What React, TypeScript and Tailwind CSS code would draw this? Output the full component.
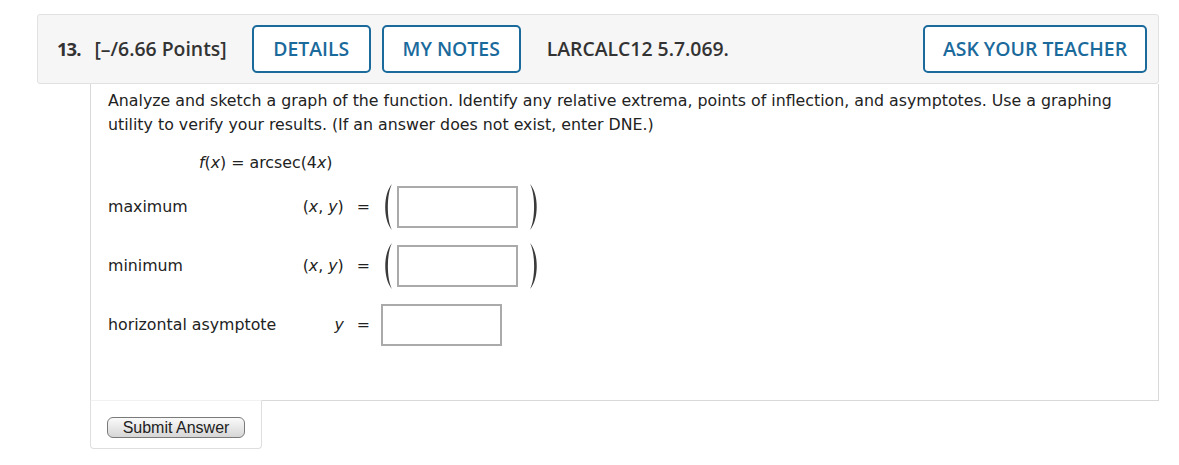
import React from 'react';

const HEAD_FONT = 'font-["Open_Sans",sans-serif]';
const BODY_FONT = 'font-["DejaVu_Sans",Verdana,sans-serif]';

const BLUE_BTN =
  'flex h-[48px] items-center justify-center rounded-[5px] border-2 border-[#1b6a9c] bg-white text-[19.4px] font-semibold text-[#1b6a9c]';

function Paren({ side }: { side: 'left' | 'right' }) {
  const d =
    side === 'left'
      ? 'M11 0 C2 10 2 36 11 46 C5.5 36 5.5 10 11 0 Z'
      : 'M1 0 C10 10 10 36 1 46 C6.5 36 6.5 10 1 0 Z';
  return (
    <svg width="12" height="46" viewBox="0 0 12 46" className="shrink-0" aria-hidden>
      <path d={d} fill="#3a3a3a" />
    </svg>
  );
}

function AnswerBox() {
  return <div className="h-[42px] w-[121px] shrink-0 border-2 border-[#aaaaaa] bg-white" />;
}

function Row({
  label,
  math,
  point,
}: {
  label: string;
  math: React.ReactNode;
  point?: boolean;
}) {
  return (
    <div className="flex h-[42px] items-center">
      <div className="w-[180px] whitespace-nowrap">{label}</div>
      <div className="flex w-[82px] justify-end whitespace-nowrap">
        {math}
        <span className="ml-[13px]">=</span>
      </div>
      <div className="ml-[11px] flex items-center">
        {point ? (
          <>
            <Paren side="left" />
            <div className="ml-[4px]">
              <AnswerBox />
            </div>
            <div className="ml-[11px]">
              <Paren side="right" />
            </div>
          </>
        ) : (
          <AnswerBox />
        )}
      </div>
    </div>
  );
}

export default function App() {
  const xy = (
    <span>
      (<i>x</i>, <i>y</i>)
    </span>
  );

  return (
    <div className="min-h-[465px] bg-white pl-[37px] pr-[20px] pt-[14px]">
      {/* question header */}
      <div
        className={`flex h-[70px] items-center rounded-[3px] border border-[#e1e1e1] bg-[#f6f6f6] pl-[19px] pr-[11px] text-[#333] ${HEAD_FONT}`}
      >
        <span className="text-[18.5px] font-bold tracking-[-1px]">13.</span>
        <span className="ml-[14px] text-[19.4px] font-semibold">[–/6.66 Points]</span>
        <button type="button" className={`ml-[25px] w-[119px] ${BLUE_BTN}`}>
          DETAILS
        </button>
        <button type="button" className={`ml-[11px] w-[139px] ${BLUE_BTN}`}>
          MY NOTES
        </button>
        <span className="ml-[26px] text-[19.4px] font-semibold">LARCALC12 5.7.069.</span>
        <button type="button" className={`ml-auto w-[224px] ${BLUE_BTN}`}>
          ASK YOUR TEACHER
        </button>
      </div>

      {/* question body */}
      <div
        className={`ml-[53px] border-x border-b border-[#d9d9d9] pb-[54px] pl-[17px] pt-[5px] text-[15.8px] leading-[24px] text-[#222] ${BODY_FONT}`}
      >
        <p className="pr-[40px]">
          Analyze and sketch a graph of the function. Identify any relative extrema, points of inflection, and
          asymptotes. Use a graphing utility to verify your results. (If an answer does not exist, enter DNE.)
        </p>
        <p className="mt-[14px] pl-[91px]">
          <i>f</i>(<i>x</i>) = arcsec(4<i>x</i>)
        </p>
        <div className="mt-[11px] flex flex-col gap-[17px]">
          <Row label="maximum" math={xy} point />
          <Row label="minimum" math={xy} point />
          <Row label="horizontal asymptote" math={<i>y</i>} />
        </div>
      </div>

      {/* submit area */}
      <div className="-mt-px ml-[53px] w-[172px] rounded-b-[4px] border-x border-b border-t border-[#dedede] border-t-[#f1f1f1] bg-white pb-[10px] pl-[16px] pt-[16px]">
        <button
          type="button"
          className='block h-[21px] w-[138px] rounded-[6px] border border-[#7a7a7a] bg-gradient-to-b from-[#fafafa] to-[#d6d6d6] font-["Liberation_Sans",Arial,sans-serif] text-[16px] leading-[19px] text-[#222]'
        >
          Submit Answer
        </button>
      </div>
    </div>
  );
}
